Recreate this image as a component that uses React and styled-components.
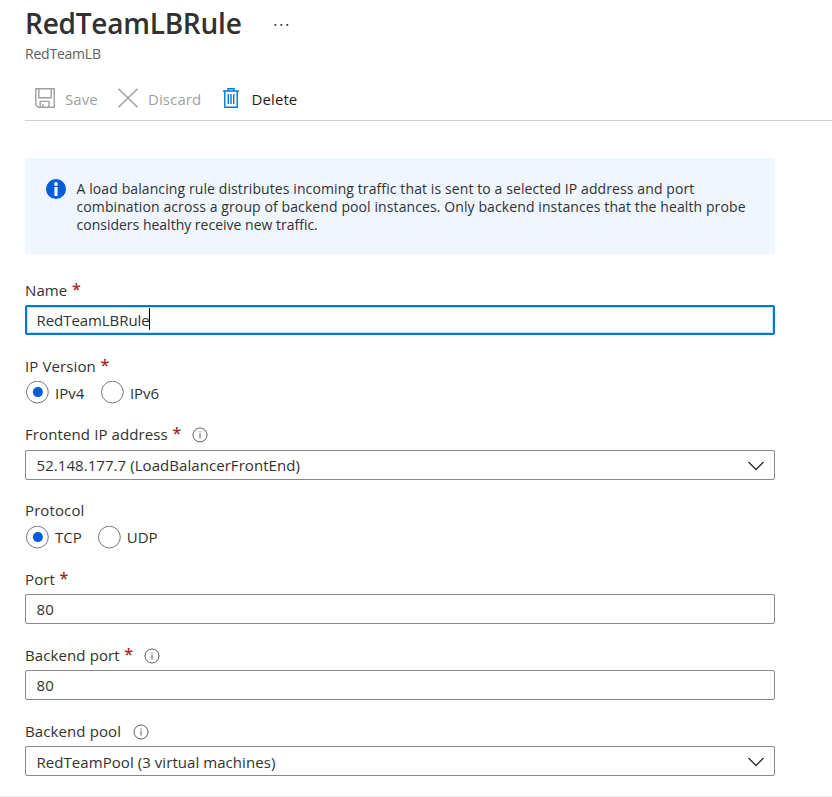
import React from "react";
import styled, { createGlobalStyle } from "styled-components";

const GlobalStyle = createGlobalStyle`
  *, *::before, *::after { box-sizing: border-box; }
  body {
    margin: 0;
    background: #fff;
    color: #323130;
    font-family: "Open Sans", "Noto Sans", sans-serif;
    font-size: 15px;
    line-height: 20px;
    overflow: hidden;
  }
`;

const Page = styled.main`
  height: 797px;
  padding: 5px 0 0 25px;
  display: flex;
  flex-direction: column;
  border-bottom: 1px solid #eaeaea;
`;

const TitleRow = styled.header`
  display: flex;
  height: 36px;
`;

const Title = styled.h1`
  margin: 0;
  width: 248px;
  font-size: 28px;
  font-weight: 600;
  line-height: 36px;
  letter-spacing: -0.24px;
`;

const MoreButton = styled.button`
  border: 0;
  padding: 0;
  background: none;
  display: flex;
  height: 16px;
  margin-top: 12px;
`;

const Subtitle = styled.div`
  margin-top: 3px;
  font-size: 14px;
  letter-spacing: -0.22px;
  color: #605e5c;
`;

const Toolbar = styled.div`
  display: flex;
  margin-top: 19px;
  height: 38px;
  padding-left: 10px;
  border-bottom: 1px solid #cfcfcf;
`;

const ToolButton = styled.button`
  display: flex;
  gap: ${(p) => p.$gap}px;
  width: ${(p) => p.$width}px;
  height: 32px;
  padding: 6px 0 0;
  border: 0;
  background: none;
  font: inherit;
  letter-spacing: 0.1px;
  text-align: left;
  color: ${(p) => (p.$muted ? "#a19f9d" : "#1f1e1d")};

  svg {
    flex: none;
    margin-top: -1px;
  }
`;

const Notice = styled.section`
  display: flex;
  gap: 9.5px;
  flex: none;
  width: 750px;
  height: 96px;
  margin-top: 37px;
  padding: 21px 20px;
  background: #eff6ff;
  border-radius: 2px;
`;

const NoticeText = styled.p`
  margin: 1px 0 0;
  font-size: 14px;
  line-height: 18px;
  letter-spacing: 0.1px;
  white-space: nowrap;
`;

const NoticeLine = styled.span`
  display: block;
  letter-spacing: ${(p) => (p.$tight ? "0" : "0.1px")};
`;

const Form = styled.form`
  display: flex;
  flex-direction: column;
  width: 750px;
  padding-top: 26px;
`;

const Field = styled.div`
  display: flex;
  flex-direction: column;
  flex: none;
  height: ${(p) => p.$height}px;
`;

const Label = styled.div`
  display: flex;
  height: 20px;
  margin-bottom: ${(p) => p.$below}px;
  letter-spacing: 0.11px;
`;

const Required = styled.span`
  margin: -1px 0 0 4.5px;
  width: 8px;
  font-size: 16px;
  font-weight: 600;
  letter-spacing: 0;
  color: #a4262c;
`;

const InfoIcon = styled.svg`
  margin: 2.5px 0 0 12px;
`;

const Box = styled.div`
  display: flex;
  align-items: center;
  height: 30px;
  padding: 0 10.5px;
  border: 1px solid #8a8886;
  border-radius: 2px;
  letter-spacing: ${(p) => p.$spacing || 0.06}px;
  ${(p) =>
    p.$focused &&
    `border: 2px solid #0078d4; padding: 0 9.5px; box-shadow: inset 0 0 0 1px #c7e0f4;`}
`;

const Value = styled.span`
  padding-top: ${(p) => p.$drop || 0}px;
`;

const Caret = styled.span`
  width: 1px;
  height: 22px;
  margin: 0 0 2px -1px;
  background: #000;
`;

const Chevron = styled.svg`
  margin: 2px -1.5px 0 auto;
`;

const RadioGroup = styled.div`
  display: flex;
  gap: ${(p) => p.$gap}px;
`;

const Radio = styled.label`
  display: flex;
  gap: 6px;
`;

const RadioText = styled.span`
  padding-top: ${(p) => p.$drop}px;
`;

function RadioOption({ checked, drop, children }) {
  return (
    <Radio>
      <svg width="24" height="23" viewBox="0 0 24 23">
        <circle cx="12.4" cy="11.1" r="10.9" fill="#fff" stroke="#797775" />
        {checked && <circle cx="12.9" cy="11.1" r="5" fill="#015cda" />}
      </svg>
      <RadioText $drop={drop}>{children}</RadioText>
    </Radio>
  );
}

function FieldLabel({ text, required, info, below = 5 }) {
  return (
    <Label $below={below}>
      {text}
      {required && <Required>*</Required>}
      {info && (
        <InfoIcon width="16" height="16" viewBox="0 0 16 16" fill="none" stroke="#605e5c">
          <circle cx="8" cy="8" r="7" />
          <path d="M8 6.5v5M8 4.3v1.2" />
        </InfoIcon>
      )}
    </Label>
  );
}

function Select({ children, drop = 0 }) {
  return (
    <Box>
      <Value $drop={drop}>{children}</Value>
      <Chevron width="18" height="12" viewBox="0 0 18 12">
        <path d="M1.5 2L9 9.5L16.5 2" fill="none" stroke="#323130" strokeWidth="1.4" />
      </Chevron>
    </Box>
  );
}

export default function App() {
  return (
    <>
      <GlobalStyle />
      <Page>
        <TitleRow>
          <Title>RedTeamLBRule</Title>
          <MoreButton aria-label="More">
            <svg width="16" height="16" viewBox="0 0 16 16" fill="#323130">
              <rect x="1.5" y="7" width="1.7" height="1.8" />
              <rect x="7.5" y="7" width="1.7" height="1.8" />
              <rect x="13.5" y="7" width="1.7" height="1.8" />
            </svg>
          </MoreButton>
        </TitleRow>
        <Subtitle>RedTeamLB</Subtitle>
        <Toolbar>
          <ToolButton $muted $gap={10} $width={82}>
            <svg width="20" height="20" viewBox="0 0 20 20" fill="none" stroke="#a19f9d" strokeWidth="1.4">
              <path d="M.8.8h18.4v18.4H3.2L.8 16.8z M3.8 .8v9h12.4v-9 M5.2 19v-5.6h8.8V19 M8 16v3" />
            </svg>
            Save
          </ToolButton>
          <ToolButton $muted $gap={9} $width={105}>
            <svg width="22" height="20" viewBox="0 0 22 20" fill="none" stroke="#a19f9d" strokeWidth="1.5">
              <path d="M1.5.8l19 18.4M20.5.8l-19 18.4" />
            </svg>
            Discard
          </ToolButton>
          <ToolButton $gap={11.5} $width={80}>
            <svg width="18" height="20" viewBox="0 0 18 20" fill="none" stroke="#0078d4" strokeWidth="1.4">
              <path d="M1 3h16M6 3V.8h6V3M2.8 3v16.2h12.4V3M6.3 6v10M9 6v10M11.7 6v10" />
            </svg>
            Delete
          </ToolButton>
        </Toolbar>
        <Notice>
          <svg width="22" height="20" viewBox="0 0 22 20">
            <circle cx="11" cy="10" r="10" fill="#015cda" />
            <circle cx="11" cy="5" r="1.9" fill="#fff" />
            <path d="M9.4 8h3.2v9H9.4z" fill="#fff" />
          </svg>
          <NoticeText>
            <NoticeLine>A load balancing rule distributes incoming traffic that is sent to a selected IP address and port</NoticeLine>
            <NoticeLine>combination across a group of backend pool instances. Only backend instances that the health probe</NoticeLine>
            <NoticeLine $tight>considers healthy receive new traffic.</NoticeLine>
          </NoticeText>
        </Notice>
        <Form>
          <Field $height={76}>
            <FieldLabel text="Name" required />
            <Box $focused $spacing={-0.06}>
              <Value>RedTeamLBRule</Value>
              <Caret />
            </Box>
          </Field>
          <Field $height={68}>
            <FieldLabel text="IP Version" required />
            <RadioGroup $gap={15.6}>
              <RadioOption checked drop={2}>IPv4</RadioOption>
              <RadioOption drop={2}>IPv6</RadioOption>
            </RadioGroup>
          </Field>
          <Field $height={76}>
            <FieldLabel text="Frontend IP address" required info below={6} />
            <Select>52.148.177.7 (LoadBalancerFrontEnd)</Select>
          </Field>
          <Field $height={69}>
            <FieldLabel text="Protocol" below={6} />
            <RadioGroup $gap={15}>
              <RadioOption checked drop={1}>TCP</RadioOption>
              <RadioOption drop={1}>UDP</RadioOption>
            </RadioGroup>
          </Field>
          <Field $height={76}>
            <FieldLabel text="Port" required />
            <Box><Value>80</Value></Box>
          </Field>
          <Field $height={76}>
            <FieldLabel text="Backend port" required info />
            <Box><Value>80</Value></Box>
          </Field>
          <Field $height={55}>
            <FieldLabel text="Backend pool" info />
            <Select drop={2}>RedTeamPool (3 virtual machines)</Select>
          </Field>
        </Form>
      </Page>
    </>
  );
}
